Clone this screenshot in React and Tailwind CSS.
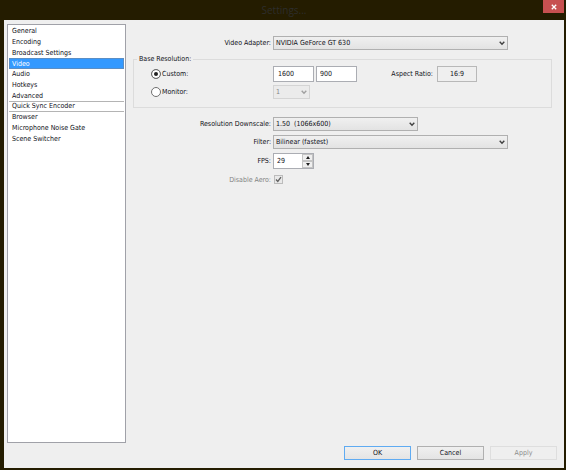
import React from 'react'
import clsx from 'clsx'

const sections = [
  'General',
  'Encoding',
  'Broadcast Settings',
  'Video',
  'Audio',
  'Hotkeys',
  'Advanced',
  'Quick Sync Encoder',
  'Browser',
  'Microphone Noise Gate',
  'Scene Switcher',
]

const Select = ({ id, label, value, disabled, className }) => (
  <div className={clsx('relative h-3.5', className)}>
    <select
      id={id}
      aria-label={label}
      disabled={disabled}
      defaultValue={value}
      className={clsx(
        'block h-full w-full appearance-none border pl-0.5 pr-3 leading-3 outline-none',
        disabled
          ? 'border-[#d4d4d4] bg-[#ebebeb] text-[#838383] opacity-100'
          : 'border-[#b0b0b0] bg-linear-to-b from-[#f0f0f0] to-[#e3e3e3]'
      )}
    >
      <option>{value}</option>
    </select>
    <svg
      viewBox="0 0 6 5"
      className={clsx(
        'pointer-events-none absolute right-[3px] top-[5px] h-[5px] w-1.5',
        disabled ? 'text-[#a0a0a0]' : 'text-[#404040]'
      )}
    >
      <path d="M0.7 0.8 L3 3.2 L5.3 0.8" fill="none" stroke="currentColor" strokeWidth="1.4" />
    </svg>
  </div>
)

const Row = ({ label, htmlFor, disabled, children }) => (
  <div className="flex items-center gap-0.5">
    <label htmlFor={htmlFor} className={clsx('w-[138px] shrink-0 text-right', disabled && 'text-[#838383]')}>
      {label}
    </label>
    {children}
  </div>
)

const Radio = ({ id, label, checked }) => (
  <div className="flex w-[122px] shrink-0 items-center gap-px">
    <input
      id={id}
      type="radio"
      name="resolution"
      defaultChecked={checked}
      className="size-2.5 shrink-0 appearance-none rounded-full border border-[#707070] bg-white checked:bg-[#202020] checked:shadow-[inset_0_0_0_2px_#fff]"
    />
    <label htmlFor={id}>{label}</label>
  </div>
)

const DialogButton = ({ children, className, disabled }) => (
  <button
    type="button"
    disabled={disabled}
    className={clsx('h-3.5 w-[67px] border text-center leading-3', className)}
  >
    {children}
  </button>
)

const App = () => {
  return (
    <div className="flex min-h-screen flex-col bg-[#241c00] pb-0.5 pl-1 pr-0.5 font-['DejaVu_Sans_Condensed','DejaVu_Sans',sans-serif] text-[7px] leading-[10px] text-[#101018]">
      {/* Title bar */}
      <header className="flex h-5 items-start">
        <span className="w-[21px]" />
        <h1 className="flex-1 text-center font-['Open_Sans',sans-serif] text-[10px] leading-5 text-[#2d2d2c]">Settings...</h1>
        <button type="button" aria-label="Close" className="flex h-[13px] w-[21px] items-center justify-center bg-[#c75050]">
          <svg viewBox="0 0 6 6" className="size-1.5">
            <path d="M0.8 0.8 L5.2 5.2 M5.2 0.8 L0.8 5.2" stroke="#fff" strokeWidth="1.3" />
          </svg>
        </button>
      </header>

      <div className="flex flex-1 flex-col bg-[#efefef]">
        <div className="flex flex-1 gap-[7px] pl-[3px] pr-3 pt-1">
          {/* Section list */}
          <nav className="w-[119px] shrink-0 border border-[#a0a1a8] bg-white p-px">
            <ul className="grid h-[118px] auto-rows-fr">
              {sections.map((name) => (
                <li
                  key={name}
                  className={clsx(
                    'flex',
                    name === 'Video' && 'bg-[#3399ff] text-white outline outline-[#5b8ec4] -outline-offset-1',
                    name === 'Quick Sync Encoder' && 'border-y border-[#b4b4b4]'
                  )}
                >
                  <a href="#" className="flex flex-1 items-center whitespace-nowrap pl-[3px]">
                    {name}
                  </a>
                </li>
              ))}
            </ul>
          </nav>

          {/* Video settings */}
          <main className="min-w-0 flex-1 pt-3">
            <Row label="Video Adapter:" htmlFor="adapter">
              <Select id="adapter" value="NVIDIA GeForce GT 630" className="mr-11 flex-1" />
            </Row>

            <fieldset className="mt-1 border border-[#dcdcdc] pb-2 pl-[17px]">
              <legend className="-ml-3.5 px-0.5">Base Resolution:</legend>
              <div className="flex items-center pt-0.5">
                <Radio id="custom" label="Custom:" checked />
                <div className="flex gap-0.5">
                  <input
                    aria-label="Width"
                    defaultValue="1600"
                    className="h-4 w-[41px] border border-[#abadb3] bg-white pl-1 outline-none"
                  />
                  <input
                    aria-label="Height"
                    defaultValue="900"
                    className="h-4 w-[41px] border border-[#abadb3] bg-white pl-[3px] outline-none"
                  />
                </div>
                <label htmlFor="aspect" className="ml-auto pr-1">
                  Aspect Ratio:
                </label>
                <input
                  id="aspect"
                  readOnly
                  defaultValue="16:9"
                  className="mr-[74px] h-4 w-10 border border-[#b8b8b8] text-center outline-none"
                />
              </div>
              <div className="mt-[3px] flex items-center">
                <Radio id="monitor" label="Monitor:" />
                <Select id="monitor-index" label="Monitor index" value="1" disabled className="w-[37px]" />
              </div>
            </fieldset>

            <div className="mt-[9px] flex flex-col gap-1">
              <Row label="Resolution Downscale:" htmlFor="downscale">
                <Select id="downscale" value={'1.50\u00a0 (1066x600)'} className="w-[145px]" />
              </Row>
              <Row label="Filter:" htmlFor="filter">
                <Select id="filter" value="Bilinear (fastest)" className="mr-11 flex-1" />
              </Row>
              <Row label="FPS:" htmlFor="fps">
                <div className="flex h-4 w-[41px] border border-[#abadb3] bg-white">
                  <input id="fps" defaultValue="29" className="w-7 pl-[3px] outline-none" />
                  <div className="flex flex-1 flex-col bg-[#efefef]">
                    <button type="button" aria-label="Increase" className="flex flex-1 items-center justify-center border border-[#c4c4c4]">
                      <svg viewBox="0 0 4 3" className="h-[3px] w-1">
                        <path d="M0 3 L2 0 L4 3 Z" fill="#202020" />
                      </svg>
                    </button>
                    <button type="button" aria-label="Decrease" className="flex flex-1 items-center justify-center border border-[#c4c4c4]">
                      <svg viewBox="0 0 4 3" className="h-[3px] w-1">
                        <path d="M0 0 L2 3 L4 0 Z" fill="#202020" />
                      </svg>
                    </button>
                  </div>
                </div>
              </Row>
              <Row label="Disable Aero:" htmlFor="aero" disabled>
                <div className="relative my-0.5 ml-px size-[9px]">
                  <input
                    id="aero"
                    type="checkbox"
                    defaultChecked
                    disabled
                    className="block size-full appearance-none border border-[#bcbcbc] bg-[#e9e9e9]"
                  />
                  <svg viewBox="0 0 9 9" className="pointer-events-none absolute inset-0 size-full">
                    <path d="M2 4.5 L3.8 6.5 L7 2.2" fill="none" stroke="#606060" strokeWidth="1.3" />
                  </svg>
                </div>
              </Row>
            </div>
          </main>
        </div>

        <footer className="flex justify-end gap-1.5 pb-2 pr-[7px] pt-[3px]">
          <DialogButton className="border-[#5fabf2] bg-linear-to-b from-[#f0f0f0] to-[#e4e4e4]">OK</DialogButton>
          <DialogButton className="border-[#b0b0b0] bg-linear-to-b from-[#f0f0f0] to-[#e4e4e4]">Cancel</DialogButton>
          <DialogButton disabled className="border-[#dedede] text-[#8c8c8c]">
            Apply
          </DialogButton>
        </footer>
      </div>
    </div>
  )
}

export default App
